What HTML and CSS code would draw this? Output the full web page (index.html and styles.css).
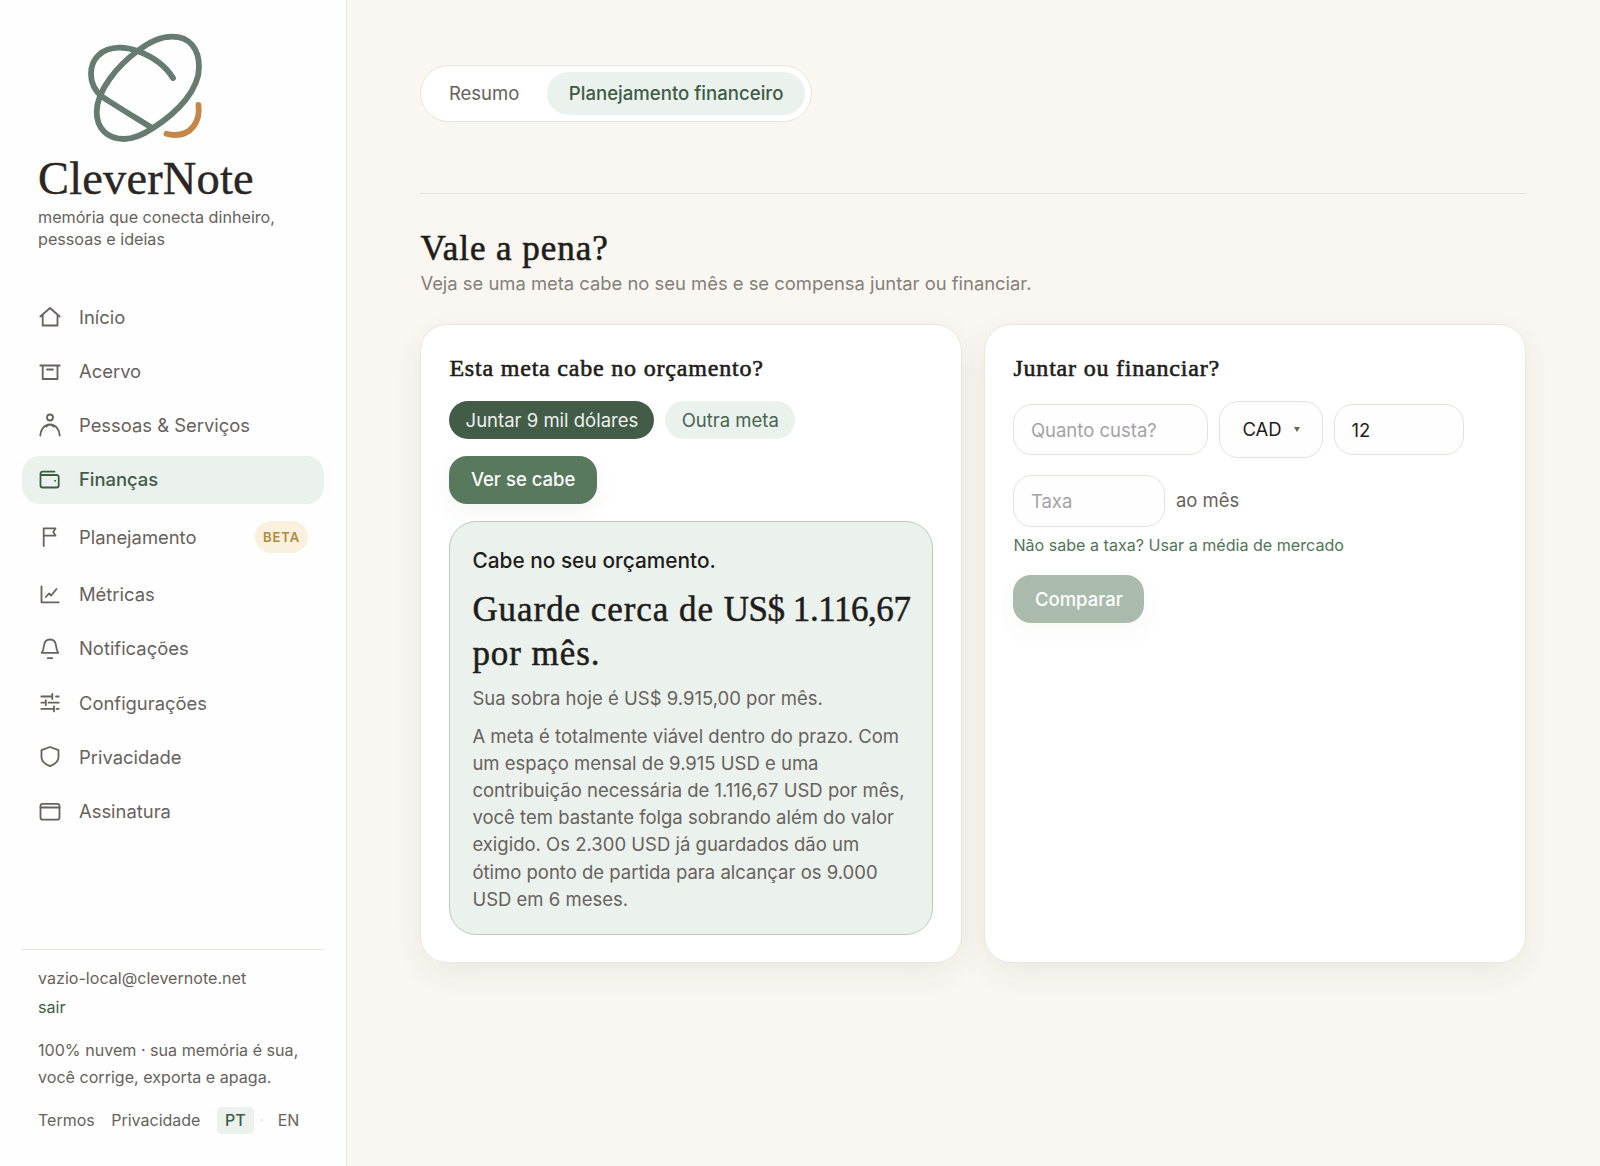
FILE: index.html
```
<!DOCTYPE html>
<html lang="pt-BR">
<head>
  <meta charset="UTF-8">
  <title>CleverNote - Finanças</title>
  <meta name="viewport" content="width=device-width, initial-scale=1.0">
  <link rel="stylesheet" href="styles.css">
</head>
<body>

  <aside class="sidebar">
    <div class="brand">
      <svg class="brand-mark" viewBox="85 30 120 115" fill="none" stroke="#667c70" stroke-width="5.8" stroke-linecap="round">
        <path d="M137.5 51C149 42 160 36.6 172 36.6C190 36.6 199 49 199 67C199 90 178 112 153 128C144 134 135 139 124 139C107 139 96.7 128 96.7 112C96.7 91 117 66 137.5 51Z"/>
        <path d="M173 78C165 65 151 56 137.5 51C132 49 125 47.5 119 47.7C102 48.3 91 58 91 74C91 83 95 91 102 96.5C108 101 136 118 152 128"/>
        <path d="M198.5 105C200.5 122 191 135 175 135C172 135 169 134.6 166.5 133.8" stroke="#c4874a"/>
      </svg>
      <div class="wordmark">CleverNote</div>
      <p class="tagline">memória que conecta dinheiro, pessoas e ideias</p>
    </div>

    <nav class="menu">
      <a class="item" href="#">
        <svg class="icon" viewBox="0 0 22 22"><path d="M1.3 10.5L11 2L20.7 10.5M3.7 8.5V19.5H18.5V8.5"/></svg>
        Início
      </a>
      <a class="item" href="#">
        <svg class="icon" viewBox="0 0 22 22"><path d="M1.3 5.5H20.7M3.7 5.5V19H18.5V5.5M8 9.5H14"/></svg>
        Acervo
      </a>
      <a class="item" href="#">
        <svg class="icon" viewBox="0 0 22 22"><circle cx="11" cy="2.5" r="3"/><path d="M1.3 20.5C1.6 14.5 5.5 9.3 11 9.3S20.4 14.5 20.7 20.5M7.5 11.5Q11 7.5 14.5 11.5"/></svg>
        Pessoas &amp; Serviços
      </a>
      <a class="item active" href="#">
        <svg class="icon" viewBox="0 0 22 22"><path d="M15.5 2.7H3.5Q1.5 2.7 1.5 5V16.5Q1.5 18.5 3.5 18.5H17.5Q19.7 18.5 19.7 16.5V8Q19.7 6 17.5 6H3.5Q1.5 6 1.5 4.5"/><circle class="dot" cx="16" cy="11.8" r=".5"/></svg>
        Finanças
      </a>
      <a class="item" href="#">
        <svg class="icon" viewBox="0 0 22 22"><path d="M4.7 20V2.3H16.5L14.3 5.9L16.5 9.7H4.7"/></svg>
        Planejamento
        <span class="beta">BETA</span>
      </a>
      <a class="item" href="#">
        <svg class="icon" viewBox="0 0 22 22"><path d="M2.5 2.5V18.3H19.7M6.8 13L10 9.5L12.2 11.5L17.5 5"/></svg>
        Métricas
      </a>
      <a class="item" href="#">
        <svg class="icon" viewBox="0 0 22 22"><path d="M2.7 14.8H19.3C17.6 12.5 17.3 10.5 17 7.5C16.6 3.6 14.3 1.5 11 1.5S5.4 3.6 5 7.5C4.7 10.5 4.4 12.5 2.7 14.8ZM8.8 20.2H13.2"/></svg>
        Notificações
      </a>
      <a class="item" href="#">
        <svg class="icon" viewBox="0 0 22 22"><path d="M2.3 4.5H13.3M13.3 2V7M17 4.5H19.7M2.3 10.7H6.8M6.8 8.2V13.2M9.5 10.7H19.7M2.3 16.9H15M15 14.4V19.4M17.5 16.9H19.7"/></svg>
        Configurações
      </a>
      <a class="item" href="#">
        <svg class="icon" viewBox="0 0 22 22"><path d="M11 1L19.5 4.2V11C19.5 15 16.5 18 11 20.2C5.5 18 2.5 15 2.5 11V4.2Z"/></svg>
        Privacidade
      </a>
      <a class="item" href="#">
        <svg class="icon" viewBox="0 0 22 22"><rect x="1.5" y="2.9" width="19" height="15.8" rx="2.2"/><path d="M1.5 6.5H20.5"/></svg>
        Assinatura
      </a>
    </nav>

    <footer class="account">
      <div class="email">vazio-local@clevernote.net</div>
      <a class="logout" href="#">sair</a>
      <p class="note">100% nuvem · sua memória é sua, você corrige, exporta e apaga.</p>
      <div class="links">
        <a href="#">Termos</a>
        <a href="#">Privacidade</a>
        <span class="langs">
          <a class="lang current" href="#">PT</a>
          <span class="sep">·</span>
          <a class="lang" href="#">EN</a>
        </span>
      </div>
    </footer>
  </aside>

  <main class="content">
    <div class="tabs">
      <button class="tab">Resumo</button>
      <button class="tab selected">Planejamento financeiro</button>
    </div>

    <section class="worth">
      <h1>Vale a pena?</h1>
      <p class="lead">Veja se uma meta cabe no seu mês e se compensa juntar ou financiar.</p>

      <div class="cards">
        <div class="card">
          <h2>Esta meta cabe no orçamento?</h2>
          <div class="chips">
            <button class="chip on">Juntar 9 mil dólares</button>
            <button class="chip">Outra meta</button>
          </div>
          <button class="primary">Ver se cabe</button>
          <div class="result">
            <p class="verdict">Cabe no seu orçamento.</p>
            <p class="amount">Guarde cerca de <span class="value">US$ 1.116,67</span> por mês.</p>
            <p class="surplus">Sua sobra hoje é US$ 9.915,00 por mês.</p>
            <p>A meta é totalmente viável dentro do prazo. Com um espaço mensal de 9.915 USD e uma contribuição necessária de 1.116,67 USD por mês, você tem bastante folga sobrando além do valor exigido. Os 2.300 USD já guardados dão um ótimo ponto de partida para alcançar os 9.000 USD em 6 meses.</p>
          </div>
        </div>

        <div class="card">
          <h2>Juntar ou financiar?</h2>
          <div class="fields">
            <input class="cost" type="text" placeholder="Quanto custa?">
            <button class="currency">CAD <span class="caret"></span></button>
            <input class="months" type="text" value="12">
          </div>
          <div class="fields">
            <input class="rate" type="text" placeholder="Taxa">
            <span class="unit">ao mês</span>
          </div>
          <a class="hint" href="#">Não sabe a taxa? Usar a média de mercado</a>
          <button class="primary" disabled>Comparar</button>
        </div>
      </div>
    </section>
  </main>

</body>
</html>
```
FILE: styles.css
```
* {
  box-sizing: border-box;
}

body {
  margin: 0;
  min-height: 1166px;
  display: flex;
  background-color: #faf7f2;
  color: #67625c;
  font-family: Inter, "Liberation Sans", sans-serif;
  font-size: 18.5px;
  line-height: 27.2px;
}

a {
  color: inherit;
  text-decoration: none;
}

p, h1, h2 {
  margin: 0;
}

button, input {
  font: inherit;
  border: none;
}

/* sidebar */
.sidebar {
  width: 347px;
  height: 1166px;
  flex: none;
  display: flex;
  flex-direction: column;
  padding: 30px 22px 0;
  background-color: #fefefe;
  border-right: 1px solid #ebe5e0;
}

.brand {
  padding: 0 16px;
}

.brand-mark {
  display: block;
  width: 120px;
  height: 115px;
  margin-left: 47px;
}

.wordmark {
  margin-top: 9px;
  color: #2b2624;
  font-family: "Liberation Serif", serif;
  font-size: 46.4px;
  line-height: 50px;
  letter-spacing: 0.2px;
  -webkit-text-stroke: 0.4px #2b2624;
}

.tagline {
  margin-top: 2px;
  font-size: 16.15px;
  line-height: 22px;
}

.menu {
  margin-top: 43px;
  display: flex;
  flex-direction: column;
  gap: 6px;
}

.item {
  height: 48.3px;
  display: flex;
  align-items: center;
  gap: 18px;
  padding: 0 16px 0 17px;
  border-radius: 18px;
  font-size: 18.4px;
}

.item:has(.beta) {
  height: 54.2px;
}

.item.active {
  background-color: #ebf1ed;
  color: #3f5b46;
  font-weight: 500;
}

.icon {
  width: 22px;
  height: 22px;
  flex: none;
  overflow: visible;
  fill: none;
  stroke: currentColor;
  stroke-width: 1.8;
  stroke-linecap: round;
  stroke-linejoin: round;
}

.icon .dot {
  stroke-width: 1;
}

.beta {
  margin-left: auto;
  padding: 0 8px 0 8.5px;
  border-radius: 17px;
  background-color: #f9f0de;
  color: #b08a3e;
  font-size: 13px;
  font-weight: 600;
  letter-spacing: 0.9px;
  line-height: 32px;
}

.account {
  margin-top: auto;
  height: 217px;
  padding: 15px 16px 0;
  border-top: 1px solid #e8e4e0;
  font-size: 16.1px;
}

.logout {
  display: block;
  margin-top: 2px;
  color: #3f5b46;
}

.note {
  margin-top: 15.5px;
}

.links {
  margin-top: 15.6px;
  display: flex;
  align-items: center;
  gap: 16.5px;
  font-size: 16px;
}

.langs {
  display: flex;
  align-items: center;
}

.lang {
  padding: 0 8px;
  border-radius: 5px;
}

.lang.current {
  background-color: #ebf1ed;
  color: #3f5b46;
  font-weight: 500;
}

.sep {
  width: 16px;
  color: #e5e0db;
  text-align: center;
}

/* main area */
.content {
  flex: 1;
  padding: 65px 73.6px 0 73.4px;
}

.tabs {
  width: 391.5px;
  height: 57px;
  display: flex;
  justify-content: space-between;
  padding: 6px;
  background-color: #fff;
  border: 1px solid #e9e4de;
  border-radius: 29px;
}

.tab {
  padding: 0 21.5px;
  border-radius: 22px;
  background: none;
  color: #67625c;
}

.tab.selected {
  background-color: #ebf1ed;
  color: #3f5b46;
  font-size: 18.6px;
  font-weight: 500;
}

.worth {
  margin-top: 70.5px;
  padding-top: 34px;
  border-top: 1px solid #e6e2dc;
}

h1, h2, .amount {
  color: #1f1d1a;
  font-family: "Liberation Serif", serif;
  font-weight: 400;
}

h1 {
  font-size: 35px;
  line-height: 42.5px;
  letter-spacing: 0.95px;
  -webkit-text-stroke: 0.6px #1f1d1a;
}

.lead {
  color: #85807a;
  font-size: 18.4px;
}

.cards {
  margin-top: 27px;
  display: grid;
  grid-template-columns: 1fr 1fr;
  gap: 22px;
}

.card {
  height: 639px;
  padding: 26px 28px;
  background-color: #fff;
  border: 1px solid #ebe6e1;
  border-radius: 27px;
  box-shadow: 0 10px 32px rgba(60, 45, 30, 0.07);
}

h2 {
  font-size: 24px;
  line-height: 34px;
  letter-spacing: 0.8px;
  -webkit-text-stroke: 0.6px #1f1d1a;
}

.chips {
  margin: 16px 0 16.5px;
  display: flex;
  gap: 11px;
}

.chip {
  height: 38px;
  padding: 0 16.2px;
  border-radius: 19px;
  background-color: #ebf1ed;
  color: #4a6350;
}

.chip.on {
  background-color: #435c47;
  color: #ebf1ed;
}

.primary {
  display: block;
  height: 48.5px;
  padding: 0 21.5px;
  border-radius: 18px;
  background-color: #58795e;
  color: #fcfcfa;
  font-weight: 500;
  box-shadow: 0 8px 22px rgba(60, 70, 50, 0.06);
}

.primary:disabled {
  opacity: 0.5;
}

.result {
  height: 414px;
  margin-top: 17px;
  padding: 25px 20px 0 22px;
  background-color: #ebf1ed;
  border: 1px solid #bfc9c1;
  border-radius: 27px;
}

.verdict {
  color: #1f1d1a;
  font-size: 20.85px;
  font-weight: 500;
}

.amount {
  margin-top: 14px;
  font-size: 35px;
  line-height: 43.5px;
  letter-spacing: 0.95px;
  -webkit-text-stroke: 0.5px #1f1d1a;
}

.amount .value {
  letter-spacing: -0.45px;
  white-space: nowrap;
}

.surplus {
  margin: 10px 0;
}

.fields {
  display: flex;
  align-items: center;
  gap: 11px;
}

.card h2 + .fields {
  margin: 16px 0 17px;
}

.fields input, .currency {
  height: 51.5px;
  padding: 0 16.5px;
  background-color: #fefefe;
  border: 1px solid #e6e1dc;
  border-radius: 19px;
  color: #1f1d1a;
}

.fields input::placeholder {
  color: #a5a2a6;
}

.cost {
  width: 195px;
}

.fields .currency {
  width: 103.5px;
  height: 57px;
  padding: 0 22px;
  display: flex;
  align-items: center;
  justify-content: space-between;
}

.caret {
  border: 3px solid transparent;
  border-top: 5px solid #67625c;
  border-bottom: none;
}

.months {
  width: 130px;
}

.rate {
  width: 151.5px;
}

.hint {
  display: block;
  margin: 5.5px 0 15.5px;
  color: #4f7558;
  font-size: 16.1px;
}
```
